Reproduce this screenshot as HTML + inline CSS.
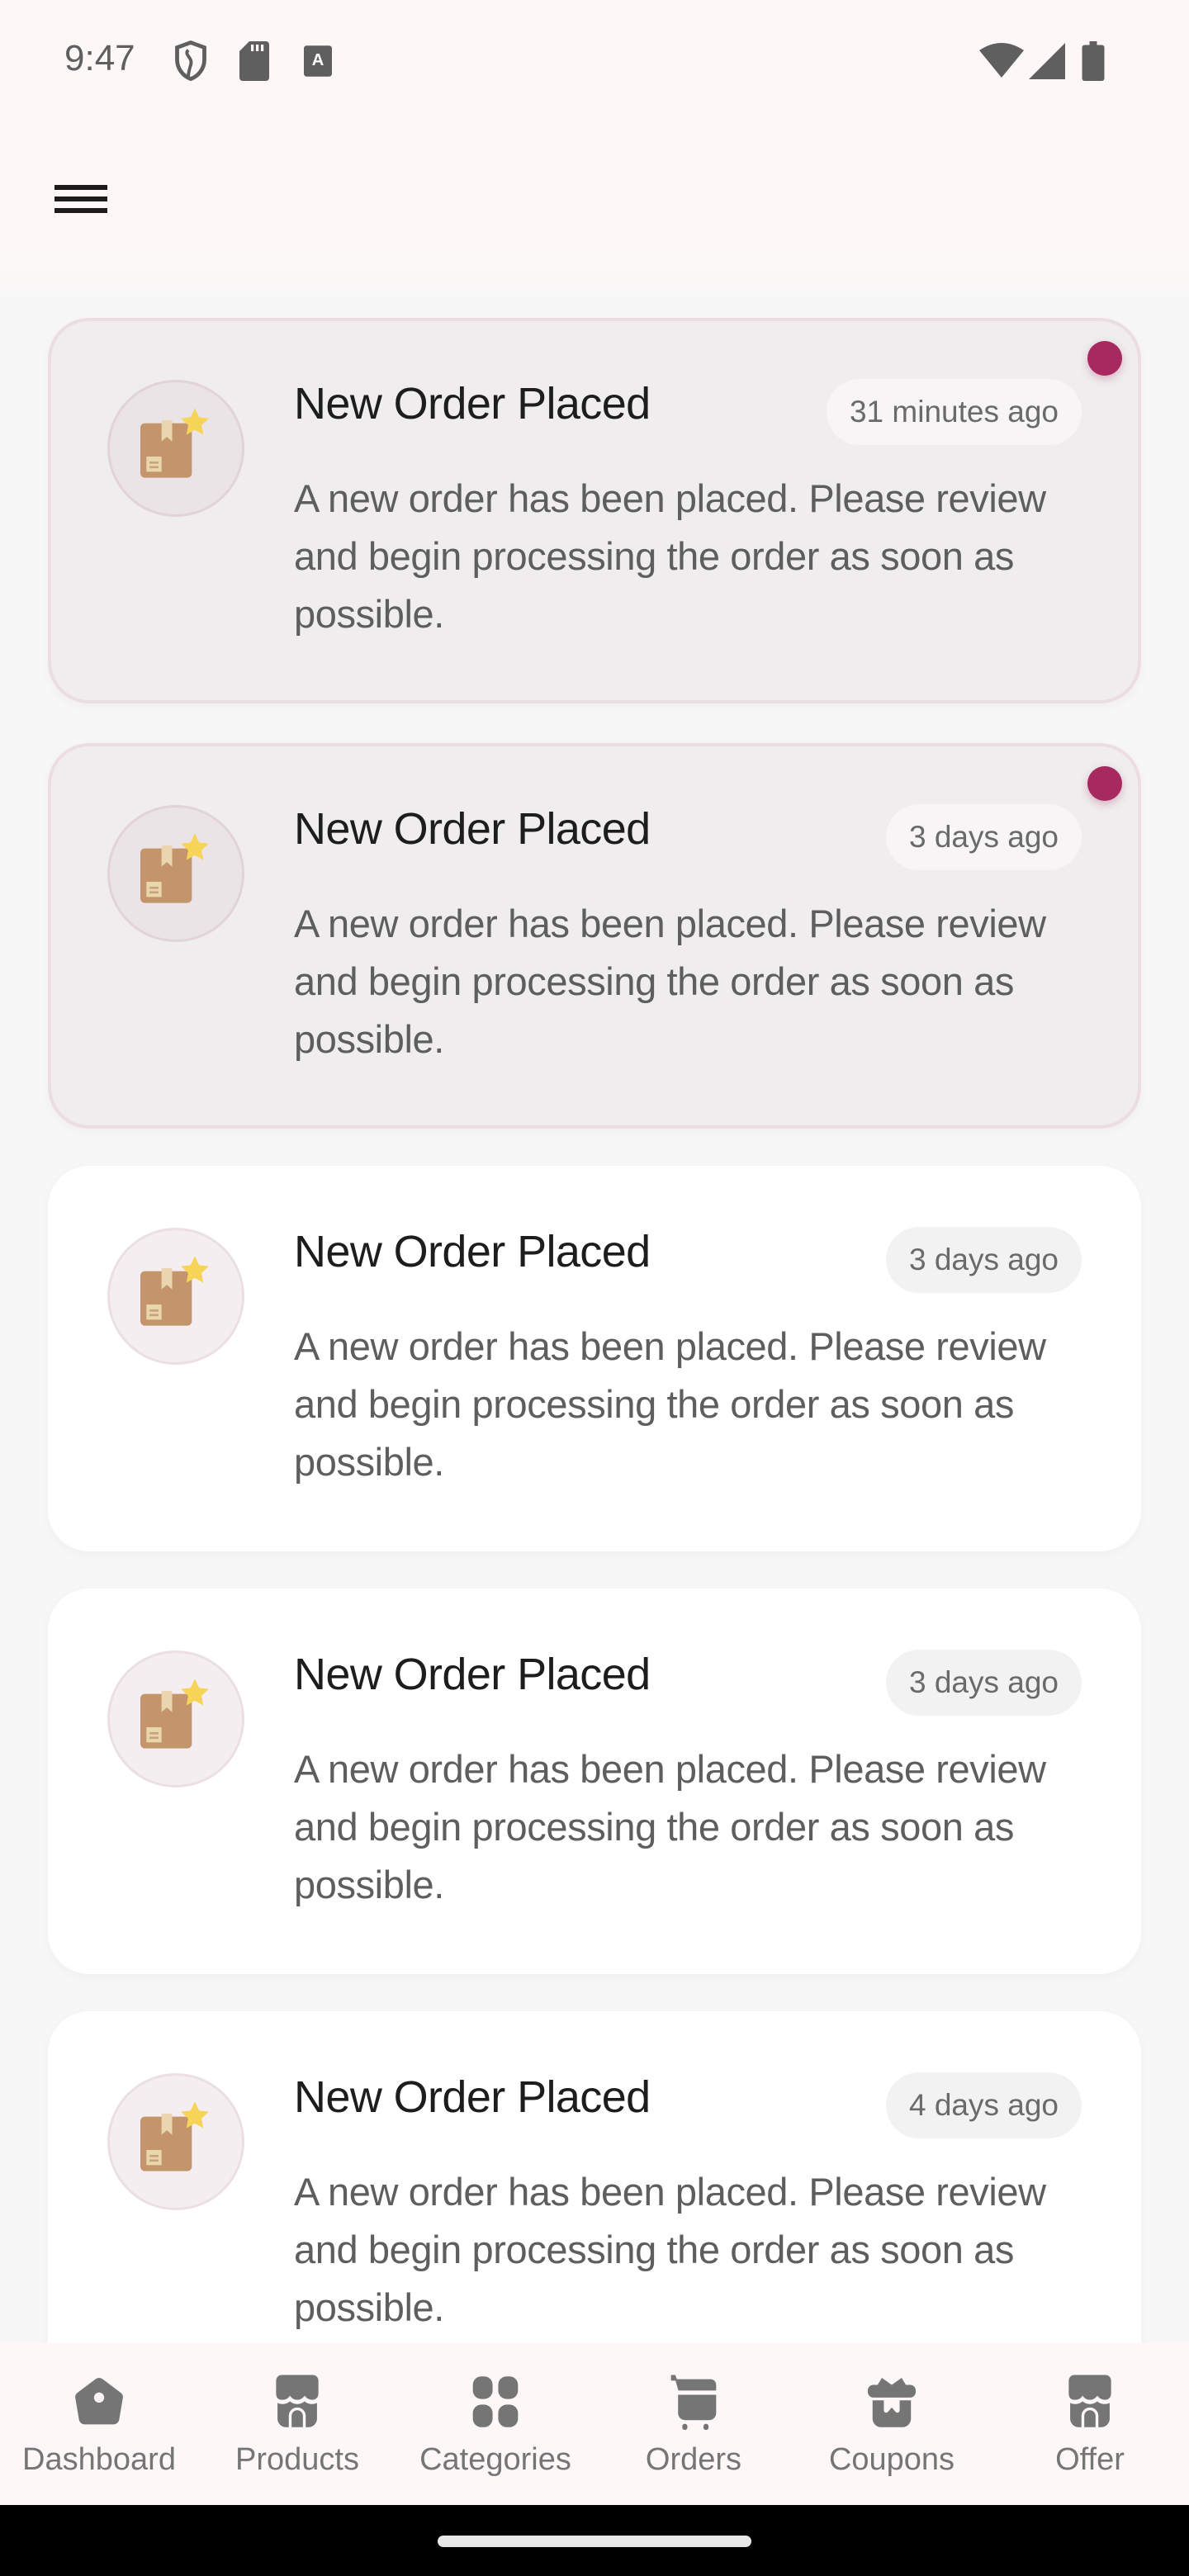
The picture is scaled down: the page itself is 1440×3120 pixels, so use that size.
<!DOCTYPE html>
<html><head><meta charset="utf-8"><style>
*{margin:0;padding:0;box-sizing:border-box}
body{width:1440px;height:3120px;overflow:hidden;background:#f8f7f7;font-family:"Liberation Sans",sans-serif;position:relative}
.hdr{position:absolute;left:0;top:0;width:1440px;height:360px;background:linear-gradient(#fdf8f7 0,#fdf8f7 300px,#f8f7f7 360px)}
.time{position:absolute;left:78px;top:46px;font-size:44px;color:#5f5f5f}
.card{position:absolute;left:58px;width:1324px;height:467px;border-radius:50px;background:#fff;box-shadow:0 4px 14px rgba(0,0,0,.035)}
.card.un{background:#efedee;border:4px solid #ecdde2}
.circ{position:absolute;left:72px;top:75px;width:166px;height:166px;border-radius:50%;background:#ebe4e7;border:3px solid #e1d3d9}
.circ svg{position:absolute;left:26px;top:24px}
.card:not(.un) .circ{background:#f4eef0;border-color:#ecdfe3}
.card.un .circ{left:68px;top:71px}
.ttl{position:absolute;left:298px;top:73px;font-size:54px;color:#1d1d1d;white-space:nowrap;letter-spacing:-0.6px}
.pill{position:absolute;right:72px;top:74px;height:80px;border-radius:40px;background:#f3f2f2;color:#6a6a6a;font-size:37px;line-height:80px;padding:0 28px;white-space:nowrap}
.card.un .pill{background:#f7f5f5;right:68px;top:70px}
.card.un .ttl{left:294px;top:69px}
.body{position:absolute;left:298px;top:184px;font-size:47px;line-height:70px;color:#5e5e5e;white-space:nowrap;letter-spacing:-0.4px}
.card.un .body{left:294px;top:180px}
.dot{position:absolute;left:1255px;top:24px;width:42px;height:42px;border-radius:50%;background:#a6295f;box-shadow:0 4px 10px rgba(166,41,95,.3)}
.nav{position:absolute;left:0;top:2838px;width:1440px;height:196px;background:#fdf8f7}
.ni{position:absolute;top:30px;width:240px;text-align:center;color:#757575;font-size:38px}
.ni svg{display:block;margin:0 auto 8px;width:82px;height:82px}
.bot{position:absolute;left:0;top:3034px;width:1440px;height:86px;background:#000}
.handle{position:absolute;left:530px;top:37px;width:380px;height:14px;border-radius:7px;background:#e8e8e8}
</style></head><body>
<div class="hdr"></div>
<div class="time">9:47</div>
<svg style="position:absolute;left:210px;top:48px" width="42" height="52" viewBox="0 0 14 17"><path d="M7 1L1.5 3v5c0 3.5 2.4 6.6 5.5 7.7 3.1-1.1 5.5-4.2 5.5-7.7V3z" fill="none" stroke="#5f5f5f" stroke-width="1.6"/><path d="M6 4c-2 2 2 3 1 6-.4 1.5-1 3-1 5" fill="none" stroke="#5f5f5f" stroke-width="1.3"/></svg>
<svg style="position:absolute;left:290px;top:50px" width="36" height="48" viewBox="0 0 9 12"><path d="M3 0h5a1 1 0 0 1 1 1v10a1 1 0 0 1-1 1H1a1 1 0 0 1-1-1V3z" fill="#5f5f5f"/><rect x="3.5" y="1" width=".8" height="2" fill="#fdf8f7"/><rect x="5" y="1" width=".8" height="2" fill="#fdf8f7"/><rect x="6.5" y="1" width=".8" height="2" fill="#fdf8f7"/></svg>
<svg style="position:absolute;left:368px;top:55px" width="34" height="38" viewBox="0 0 10 11"><rect width="10" height="11" rx="1" fill="#5f5f5f"/><text x="5" y="7" font-size="6" font-weight="bold" text-anchor="middle" fill="#fff" font-family="Liberation Sans">A</text></svg>
<svg style="position:absolute;left:1186px;top:52px" width="54" height="42" viewBox="0 0 18 14"><path d="M0 3Q9-3 18 3L9 14z" fill="#5f5f5f"/></svg>
<svg style="position:absolute;left:1246px;top:52px" width="44" height="44" viewBox="0 0 14 14"><path d="M14 0V14H0z" fill="#5f5f5f"/></svg>
<svg style="position:absolute;left:1310px;top:50px" width="28" height="48" viewBox="0 0 9 16"><rect x="3" y="0" width="3" height="2" fill="#5f5f5f"/><rect x="0" y="1.5" width="9" height="14.5" rx="1" fill="#5f5f5f"/></svg>
<div style="position:absolute;left:66px;top:224px;width:64px;height:6px;background:#1d1b1b"></div>
<div style="position:absolute;left:66px;top:238px;width:64px;height:6px;background:#1d1b1b"></div>
<div style="position:absolute;left:66px;top:252px;width:64px;height:6px;background:#1d1b1b"></div>

<div class="card un" style="top:385px"><div class="dot"></div><div class="circ"><svg width="110" height="110" viewBox="0 0 30 30"><rect x="3" y="7" width="17" height="18" rx="1.5" fill="#c4956a"/><path d="M10 6h3.5v7l-1.75-1.5L10 13z" fill="#e9d6ae"/><rect x="5" y="18" width="5" height="5" fill="#ead6ab"/><path d="M6 20h3M6 21.5h3" stroke="#c4a57d" stroke-width=".7"/><path d="M21 2l1.4 3 3.2.4-2.4 2.2.6 3.2-2.8-1.6-2.8 1.6.6-3.2-2.4-2.2 3.2-.4z" fill="#f5d458"/></svg></div><div class="ttl">New Order Placed</div><div class="pill">31 minutes ago</div><div class="body">A new order has been placed. Please review<br>and begin processing the order as soon as<br>possible.</div></div>

<div class="card un" style="top:900px"><div class="dot"></div><div class="circ"><svg width="110" height="110" viewBox="0 0 30 30"><rect x="3" y="7" width="17" height="18" rx="1.5" fill="#c4956a"/><path d="M10 6h3.5v7l-1.75-1.5L10 13z" fill="#e9d6ae"/><rect x="5" y="18" width="5" height="5" fill="#ead6ab"/><path d="M6 20h3M6 21.5h3" stroke="#c4a57d" stroke-width=".7"/><path d="M21 2l1.4 3 3.2.4-2.4 2.2.6 3.2-2.8-1.6-2.8 1.6.6-3.2-2.4-2.2 3.2-.4z" fill="#f5d458"/></svg></div><div class="ttl">New Order Placed</div><div class="pill">3 days ago</div><div class="body">A new order has been placed. Please review<br>and begin processing the order as soon as<br>possible.</div></div>

<div class="card" style="top:1412px"><div class="circ"><svg width="110" height="110" viewBox="0 0 30 30"><rect x="3" y="7" width="17" height="18" rx="1.5" fill="#c4956a"/><path d="M10 6h3.5v7l-1.75-1.5L10 13z" fill="#e9d6ae"/><rect x="5" y="18" width="5" height="5" fill="#ead6ab"/><path d="M6 20h3M6 21.5h3" stroke="#c4a57d" stroke-width=".7"/><path d="M21 2l1.4 3 3.2.4-2.4 2.2.6 3.2-2.8-1.6-2.8 1.6.6-3.2-2.4-2.2 3.2-.4z" fill="#f5d458"/></svg></div><div class="ttl">New Order Placed</div><div class="pill">3 days ago</div><div class="body">A new order has been placed. Please review<br>and begin processing the order as soon as<br>possible.</div></div>

<div class="card" style="top:1924px"><div class="circ"><svg width="110" height="110" viewBox="0 0 30 30"><rect x="3" y="7" width="17" height="18" rx="1.5" fill="#c4956a"/><path d="M10 6h3.5v7l-1.75-1.5L10 13z" fill="#e9d6ae"/><rect x="5" y="18" width="5" height="5" fill="#ead6ab"/><path d="M6 20h3M6 21.5h3" stroke="#c4a57d" stroke-width=".7"/><path d="M21 2l1.4 3 3.2.4-2.4 2.2.6 3.2-2.8-1.6-2.8 1.6.6-3.2-2.4-2.2 3.2-.4z" fill="#f5d458"/></svg></div><div class="ttl">New Order Placed</div><div class="pill">3 days ago</div><div class="body">A new order has been placed. Please review<br>and begin processing the order as soon as<br>possible.</div></div>

<div class="card" style="top:2436px"><div class="circ"><svg width="110" height="110" viewBox="0 0 30 30"><rect x="3" y="7" width="17" height="18" rx="1.5" fill="#c4956a"/><path d="M10 6h3.5v7l-1.75-1.5L10 13z" fill="#e9d6ae"/><rect x="5" y="18" width="5" height="5" fill="#ead6ab"/><path d="M6 20h3M6 21.5h3" stroke="#c4a57d" stroke-width=".7"/><path d="M21 2l1.4 3 3.2.4-2.4 2.2.6 3.2-2.8-1.6-2.8 1.6.6-3.2-2.4-2.2 3.2-.4z" fill="#f5d458"/></svg></div><div class="ttl">New Order Placed</div><div class="pill">4 days ago</div><div class="body">A new order has been placed. Please review<br>and begin processing the order as soon as<br>possible.</div></div>

<div class="nav">
<div class="ni" style="left:0"><svg viewBox="0 0 24 24"><path d="M10.8 3.9a2 2 0 0 1 2.4 0l6.5 4.9a2 2 0 0 1 .7 2l-1.3 7.6a2 2 0 0 1-2 1.6H6.9a2 2 0 0 1-2-1.6L3.6 10.8a2 2 0 0 1 .7-2z" fill="#757575"/><circle cx="12" cy="10.5" r="1.8" fill="#fdf8f7"/></svg>Dashboard</div>
<div class="ni" style="left:240px"><svg viewBox="0 0 24 24"><path d="M6.5 2.5h11a2 2 0 0 1 2 2V9c0 1.5-1 2.3-2.2 2.3S15 10.5 14.6 9.8c-.5.8-1.4 1.5-2.6 1.5s-2.1-.7-2.6-1.5c-.4.7-1.1 1.5-2.7 1.5S4.5 10.5 4.5 9V4.5a2 2 0 0 1 2-2z" fill="#757575"/><path d="M5 12.4c.6.3 1.2.4 1.8.4 1 0 2-.4 2.6-1 .7.6 1.6 1 2.6 1s1.9-.4 2.6-1c.6.6 1.6 1 2.6 1 .6 0 1.2-.1 1.8-.4V18a3 3 0 0 1-3 3h-1v-4a3 3 0 0 0-6 0v4H8a3 3 0 0 1-3-3z" fill="#757575"/><path d="M10 21v-4a2 2 0 0 1 4 0v4z" fill="#757575"/></svg>Products</div>
<div class="ni" style="left:480px"><svg viewBox="0 0 24 24"><rect x="4" y="3" width="7" height="8" rx="3" fill="#757575"/><rect x="13" y="3" width="7" height="8" rx="3" fill="#757575"/><rect x="4" y="13" width="7" height="8" rx="3" fill="#757575"/><rect x="13" y="13" width="7" height="8" rx="3" fill="#757575"/></svg>Categories</div>
<div class="ni" style="left:720px"><svg viewBox="0 0 24 24"><path d="M4 2.5h1.5l.6 1.5H18a2 2 0 0 1 2 2V8H6.6l-1-3.5H4z" fill="#757575"/><path d="M6.5 9.5H20V16a2.5 2.5 0 0 1-2.5 2.5H9A2.5 2.5 0 0 1 6.5 16z" fill="#757575"/><rect x="8" y="19.8" width="1.8" height="2.2" rx=".9" fill="#757575"/><rect x="15.5" y="19.8" width="1.8" height="2.2" rx=".9" fill="#757575"/></svg>Orders</div>
<div class="ni" style="left:960px"><svg viewBox="0 0 24 24"><path d="M8.5 3.5L12 6l3.5-2.5L17 6h1.5a2 2 0 0 1 2 2v.5a2 2 0 0 1-2 2h-13a2 2 0 0 1-2-2V8a2 2 0 0 1 2-2H7z" fill="#757575"/><path d="M5.2 11.5h4v3.5c0 .8 1 1.2 1.5.5L12 14l1.3 1.5c.5.7 1.5.3 1.5-.5v-3.5h4V18a3 3 0 0 1-3 3H8.2a3 3 0 0 1-3-3z" fill="#757575"/></svg>Coupons</div>
<div class="ni" style="left:1200px"><svg viewBox="0 0 24 24"><path d="M6.5 2.5h11a2 2 0 0 1 2 2V9c0 1.5-1 2.3-2.2 2.3S15 10.5 14.6 9.8c-.5.8-1.4 1.5-2.6 1.5s-2.1-.7-2.6-1.5c-.4.7-1.1 1.5-2.7 1.5S4.5 10.5 4.5 9V4.5a2 2 0 0 1 2-2z" fill="#757575"/><path d="M5 12.4c.6.3 1.2.4 1.8.4 1 0 2-.4 2.6-1 .7.6 1.6 1 2.6 1s1.9-.4 2.6-1c.6.6 1.6 1 2.6 1 .6 0 1.2-.1 1.8-.4V18a3 3 0 0 1-3 3h-1v-4a3 3 0 0 0-6 0v4H8a3 3 0 0 1-3-3z" fill="#757575"/><path d="M10 21v-4a2 2 0 0 1 4 0v4z" fill="#757575"/></svg>Offer</div>
</div>
<div class="bot"><div class="handle"></div></div>
</body></html>
